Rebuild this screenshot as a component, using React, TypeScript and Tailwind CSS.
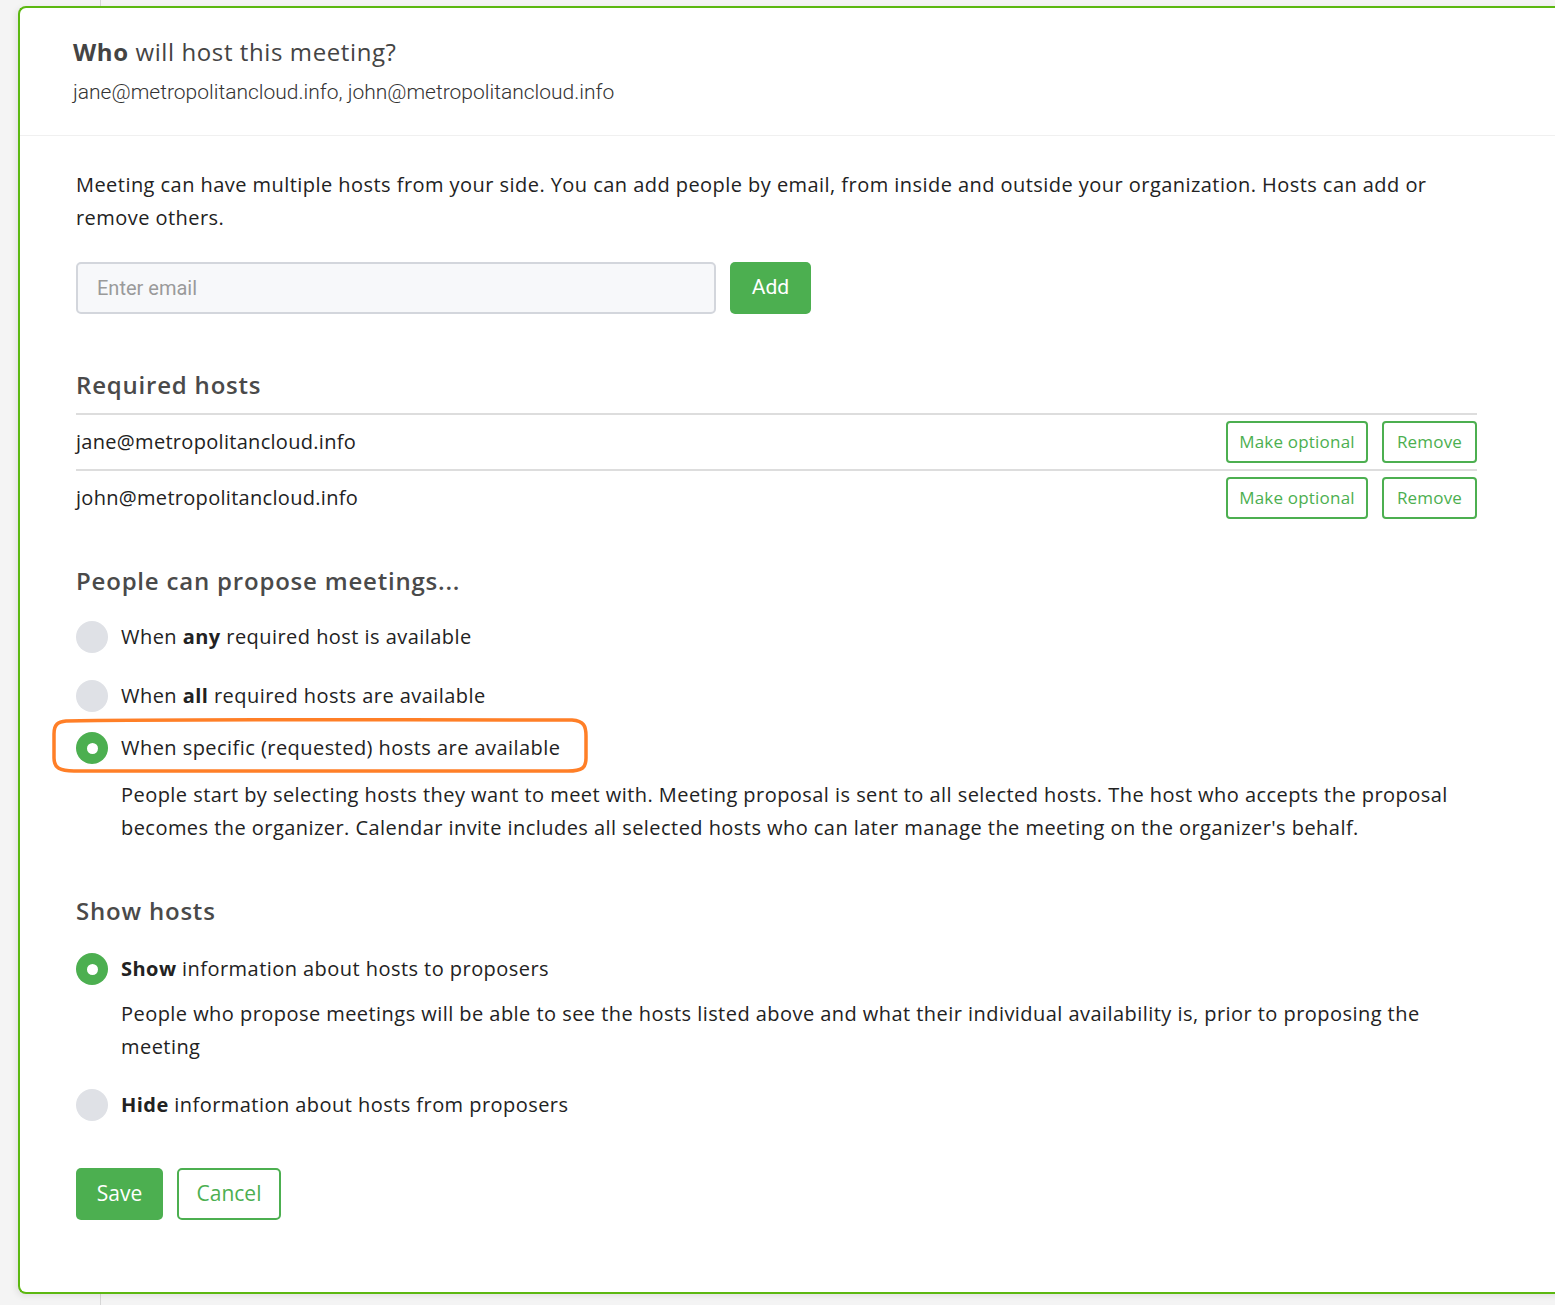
import React from 'react';

const BODY_FONT = 'font-["Open_Sans","Lato",sans-serif]';
const NARROW_FONT = 'font-["Roboto","Liberation_Sans",sans-serif]';

const hosts = ['jane@metropolitancloud.info', 'john@metropolitancloud.info'];

// radio dot: grey when off, green with white centre when on
const Radio = ({ checked }: { checked?: boolean }) =>
  checked ? (
    <span className="flex h-8 w-8 shrink-0 items-center justify-center rounded-full bg-[#4caf50]">
      <span className="h-[11px] w-[11px] rounded-full bg-white" />
    </span>
  ) : (
    <span className="h-8 w-8 shrink-0 rounded-full bg-[#dfe1e6]" />
  );

const Option = ({
  checked,
  children,
  className = '',
}: {
  checked?: boolean;
  children: React.ReactNode;
  className?: string;
}) => (
  <label className={`flex items-center gap-[13px] text-[20px] leading-8 tracking-[0.45px] text-[#222] ${className}`}>
    <Radio checked={checked} />
    <span>{children}</span>
  </label>
);

const OutlineBtn = ({ children, w }: { children: React.ReactNode; w: string }) => (
  <button className={`h-[42px] rounded-[4px] border-2 border-[#4caf50] bg-white text-[17px] text-[#4caf50] ${w}`}>
    {children}
  </button>
);

export default function App() {
  return (
    <div className={`relative h-[1305px] w-[1555px] overflow-hidden bg-[#f4f4f4] ${BODY_FONT}`}>
      {/* background divider line behind the card */}
      <div className="absolute left-[100px] top-0 h-full w-px bg-[#d6d6d6]" />

      <div className="relative ml-[18px] mt-[6px] h-[1288px] w-[1560px] rounded-l-[8px] border-2 border-r-0 border-[#5cb811] bg-white shadow-[-2px_2px_6px_rgba(0,0,0,0.08)]">
        {/* header */}
        <div className="border-b border-[#f0f0f0] px-[53px] pb-[29px] pt-[28px]">
          <h2 className="text-[24px] leading-8 tracking-[0.6px] text-[#444]">
            <span className="font-bold">Who</span> will host this meeting?
          </h2>
          <p className={`mt-[10px] text-[21px] font-light leading-7 text-[#333] ${NARROW_FONT}`}>
            jane@metropolitancloud.info, john@metropolitancloud.info
          </p>
        </div>

        {/* body */}
        <div className="w-[1457px] pl-[56px] pt-[32px] tracking-[0.45px]">
          <p className="text-[20px] leading-[33px] text-[#222]">
            Meeting can have multiple hosts from your side. You can add people by email, from inside and outside your
            organization. Hosts can add or remove others.
          </p>

          <div className="mt-[28px] flex gap-[14px] tracking-normal">
            <input
              placeholder="Enter email"
              className={`h-[52px] w-[640px] rounded-[5px] border-2 border-[#d3d6dc] bg-[#f7f8fa] px-[19px] text-[20px] placeholder:text-[#9a9a9a] ${NARROW_FONT}`}
            />
            <button className={`h-[52px] w-[81px] rounded-[5px] bg-[#4caf50] text-[21px] text-white ${NARROW_FONT}`}>
              Add
            </button>
          </div>

          <h3 className="mt-[55px] text-[24px] font-semibold leading-8 tracking-[0.8px] text-[#4a4a4a]">Required hosts</h3>
          <div className="mt-[12px]">
            {hosts.map((h) => (
              <div key={h} className="flex items-center justify-between border-t-2 border-[#dddddd] py-[6px]">
                <span className="text-[20px] tracking-[0.3px] text-[#222]">{h}</span>
                <div className="flex gap-[14px] tracking-[0.2px]">
                  <OutlineBtn w="w-[142px]">Make optional</OutlineBtn>
                  <OutlineBtn w="w-[95px]">Remove</OutlineBtn>
                </div>
              </div>
            ))}
          </div>

          <h3 className="mt-[40px] text-[24px] font-semibold leading-8 tracking-[0.8px] text-[#4a4a4a]">
            People can propose meetings...
          </h3>
          <Option className="mt-[24px]">
            When <b>any</b> required host is available
          </Option>
          <Option className="mt-[27px]">
            When <b>all</b> required hosts are available
          </Option>
          <div className="relative mt-[20px]">
            <Option checked>When specific (requested) hosts are available</Option>
            {/* hand-drawn highlight around the chosen option */}
            <svg
              className="pointer-events-none absolute left-[-24px] top-[-14px] overflow-visible"
              width="536"
              height="56"
              viewBox="0 0 536 56"
            >
              <path
                d="M14 3 C120 1 300 2 520 2 C532 3 534 8 534 18 L534 40 C534 50 530 53 516 53 L22 53 C8 53 2 50 2 40 L2 16 C2 6 6 4 14 3 Z"
                fill="none"
                stroke="#ff7f27"
                strokeWidth="3.5"
              />
            </svg>
          </div>
          <p className="mt-[14px] pl-[45px] text-[20px] leading-[33px] text-[#222]">
            People start by selecting hosts they want to meet with. Meeting proposal is sent to all selected hosts. The
            host who accepts the proposal becomes the organizer. Calendar invite includes all selected hosts who can
            later manage the meeting on the organizer's behalf.
          </p>

          <h3 className="mt-[51px] text-[24px] font-semibold leading-8 tracking-[0.8px] text-[#4a4a4a]">Show hosts</h3>
          <Option checked className="mt-[26px]">
            <b>Show</b> information about hosts to proposers
          </Option>
          <p className="mt-[12px] pl-[45px] text-[20px] leading-[33px] text-[#222]">
            People who propose meetings will be able to see the hosts listed above and what their individual
            availability is, prior to proposing the meeting
          </p>
          <Option className="mt-[26px]">
            <b>Hide</b> information about hosts from proposers
          </Option>

          <div className="mt-[47px] flex gap-[14px] tracking-normal">
            <button className="h-[52px] w-[87px] rounded-[5px] bg-[#4caf50] text-[21px] text-white">Save</button>
            <button className="h-[52px] w-[104px] rounded-[5px] border-2 border-[#4caf50] bg-white text-[21px] text-[#4caf50]">
              Cancel
            </button>
          </div>
        </div>
      </div>
    </div>
  );
}
